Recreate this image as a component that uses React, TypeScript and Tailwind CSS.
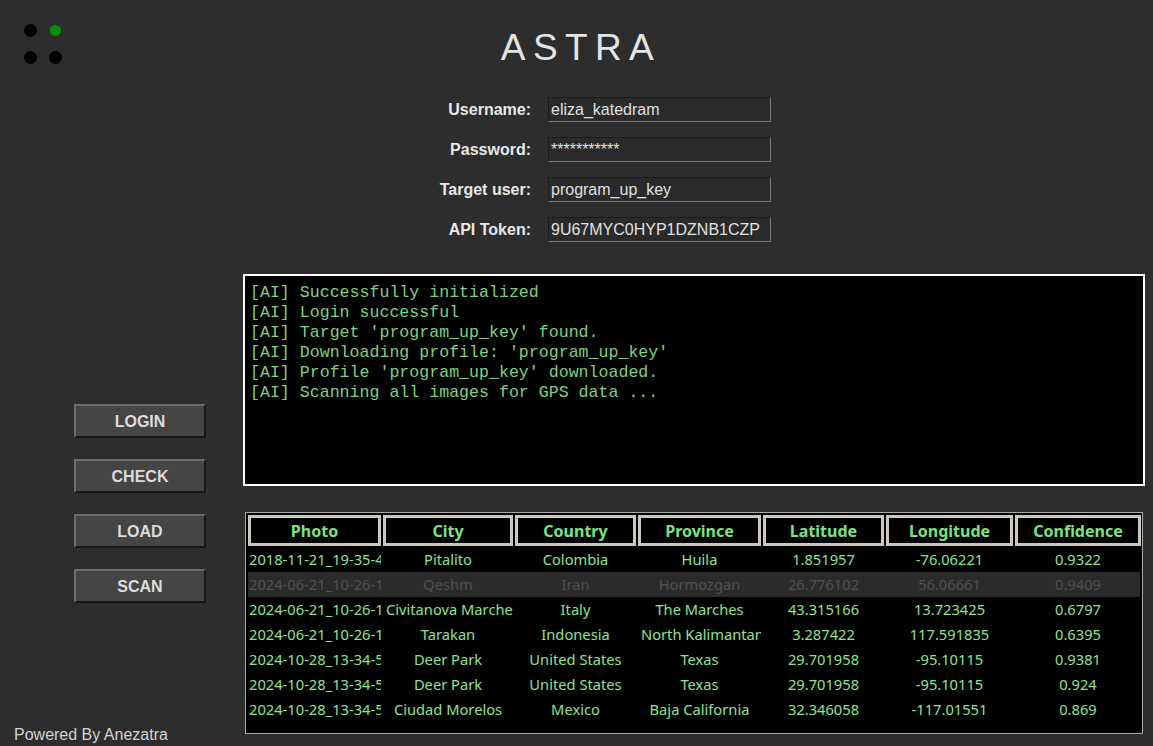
const fields = [
  { label: "Username:", value: "eliza_katedram" },
  { label: "Password:", value: "***********" },
  { label: "Target user:", value: "program_up_key" },
  { label: "API Token:", value: "9U67MYC0HYP1DZNB1CZP" },
];

const logLines = [
  "[AI] Successfully initialized",
  "[AI] Login successful",
  "[AI] Target 'program_up_key' found.",
  "[AI] Downloading profile: 'program_up_key'",
  "[AI] Profile 'program_up_key' downloaded.",
  "[AI] Scanning all images for GPS data ...",
];

const columns = ["Photo", "City", "Country", "Province", "Latitude", "Longitude", "Confidence"];

const rows = [
  ["2018-11-21_19-35-49", "Pitalito", "Colombia", "Huila", "1.851957", "-76.06221", "0.9322"],
  ["2024-06-21_10-26-17", "Qeshm", "Iran", "Hormozgan", "26.776102", "56.06661", "0.9409"],
  ["2024-06-21_10-26-17", "Civitanova Marche", "Italy", "The Marches", "43.315166", "13.723425", "0.6797"],
  ["2024-06-21_10-26-17", "Tarakan", "Indonesia", "North Kalimantan", "3.287422", "117.591835", "0.6395"],
  ["2024-10-28_13-34-55", "Deer Park", "United States", "Texas", "29.701958", "-95.10115", "0.9381"],
  ["2024-10-28_13-34-55", "Deer Park", "United States", "Texas", "29.701958", "-95.10115", "0.924"],
  ["2024-10-28_13-34-55", "Ciudad Morelos", "Mexico", "Baja California", "32.346058", "-117.01551", "0.869"],
];

const buttons = ["LOGIN", "CHECK", "LOAD", "SCAN"];

const gridCols = "grid grid-cols-[133px_130px_121px_123px_121px_127px_126px] gap-x-[2px]";

export default function App() {
  return (
    <div className="flex h-[746px] w-[1153px] flex-col overflow-hidden bg-[#2d2d2d] font-['Liberation_Sans',Arial,sans-serif]">
      {/* header */}
      <div className="grid grid-cols-[1fr_auto_1fr]">
        <div className="grid w-fit grid-cols-2 gap-[12px] pl-[24px] pt-[24px]">
          <span className="h-[13px] w-[13px] rounded-full bg-black" />
          <span className="h-[13px] w-[13px] rounded-full border border-[#064a06] bg-[#0b8a0b]" />
          <span className="h-[13px] w-[13px] rounded-full bg-black" />
          <span className="h-[13px] w-[13px] rounded-full bg-black" />
        </div>
        <h1 className="mt-[29px] pl-[9px] text-[37px] leading-none tracking-[0.2em] text-[#e4e4e4]">ASTRA</h1>
        <div />
      </div>

      {/* login form */}
      <div className="mt-[31px] flex flex-col gap-[15px] pl-[391px]">
        {fields.map((f) => (
          <div key={f.label} className="flex h-[25px] items-center gap-[17px]">
            <span className="w-[140px] text-right text-[16px] font-bold text-[#e8e8e8]">{f.label}</span>
            <div className="flex h-[25px] w-[223px] items-center border border-t-[#1a1a1a] border-l-[#1a1a1a] border-r-[#7a7a7a] border-b-[#7a7a7a] bg-[#2a2a2a] pl-[2px] pt-px text-[16px] text-[#e0e0e0]">
              {f.value}
            </div>
          </div>
        ))}
      </div>

      {/* main area */}
      <div className="mt-[32px] flex flex-1">
        <div className="flex w-[243px] flex-col">
          <div className="flex flex-col gap-[21px] pl-[74px] pt-[130px]">
            {buttons.map((b) => (
              <button
                key={b}
                className="h-[34px] w-[132px] border-2 border-t-[#6c6c6c] border-l-[#6c6c6c] border-r-[#161616] border-b-[#161616] bg-[#454545] pt-[2px] text-[16px] font-bold text-[#dcdcdc]"
              >
                {b}
              </button>
            ))}
          </div>
          <p className="mt-auto pb-[2px] pl-[14px] text-[16px] leading-[18px] text-[#d4d4d4]">Powered By Anezatra</p>
        </div>

        <div className="flex w-[902px] flex-col">
          {/* console */}
          <div className="h-[212px] border-2 border-white bg-black px-[5px] pt-[7px] font-['Liberation_Mono','Courier_New',monospace] text-[16.6px] leading-[20px] text-[#7fd07f]">
            {logLines.map((l) => (
              <div key={l} className="whitespace-pre">{l}</div>
            ))}
          </div>

          {/* results table */}
          <div className="mx-[2px] mt-[26px] h-[222px] border border-[#a9a9a9] bg-black p-[2px] font-['Noto_Sans',sans-serif]">
            <div className={gridCols}>
              {columns.map((c) => (
                <div
                  key={c}
                  className="flex h-[31px] items-center justify-center border-[3px] border-[#cbc6be] bg-black text-[16px] font-bold text-[#7ee27e] shadow-[inset_0_0_0_1px_#000]"
                >
                  {c}
                </div>
              ))}
            </div>
            <div className="mt-px">
              {rows.map((r, i) => (
                <div
                  key={i}
                  className={`${gridCols} h-[25px] items-center text-[14.7px] ${i === 1 ? "bg-[#2b2b2b] text-[#505050]" : "text-[#8fe38f]"}`}
                >
                  {r.map((cell, j) => (
                    <div key={j} className={`overflow-hidden whitespace-nowrap ${j === 0 ? "pl-[1px] text-left" : "px-[3px] text-center"}`}>
                      {cell}
                    </div>
                  ))}
                </div>
              ))}
            </div>
          </div>
        </div>
      </div>
    </div>
  );
}
